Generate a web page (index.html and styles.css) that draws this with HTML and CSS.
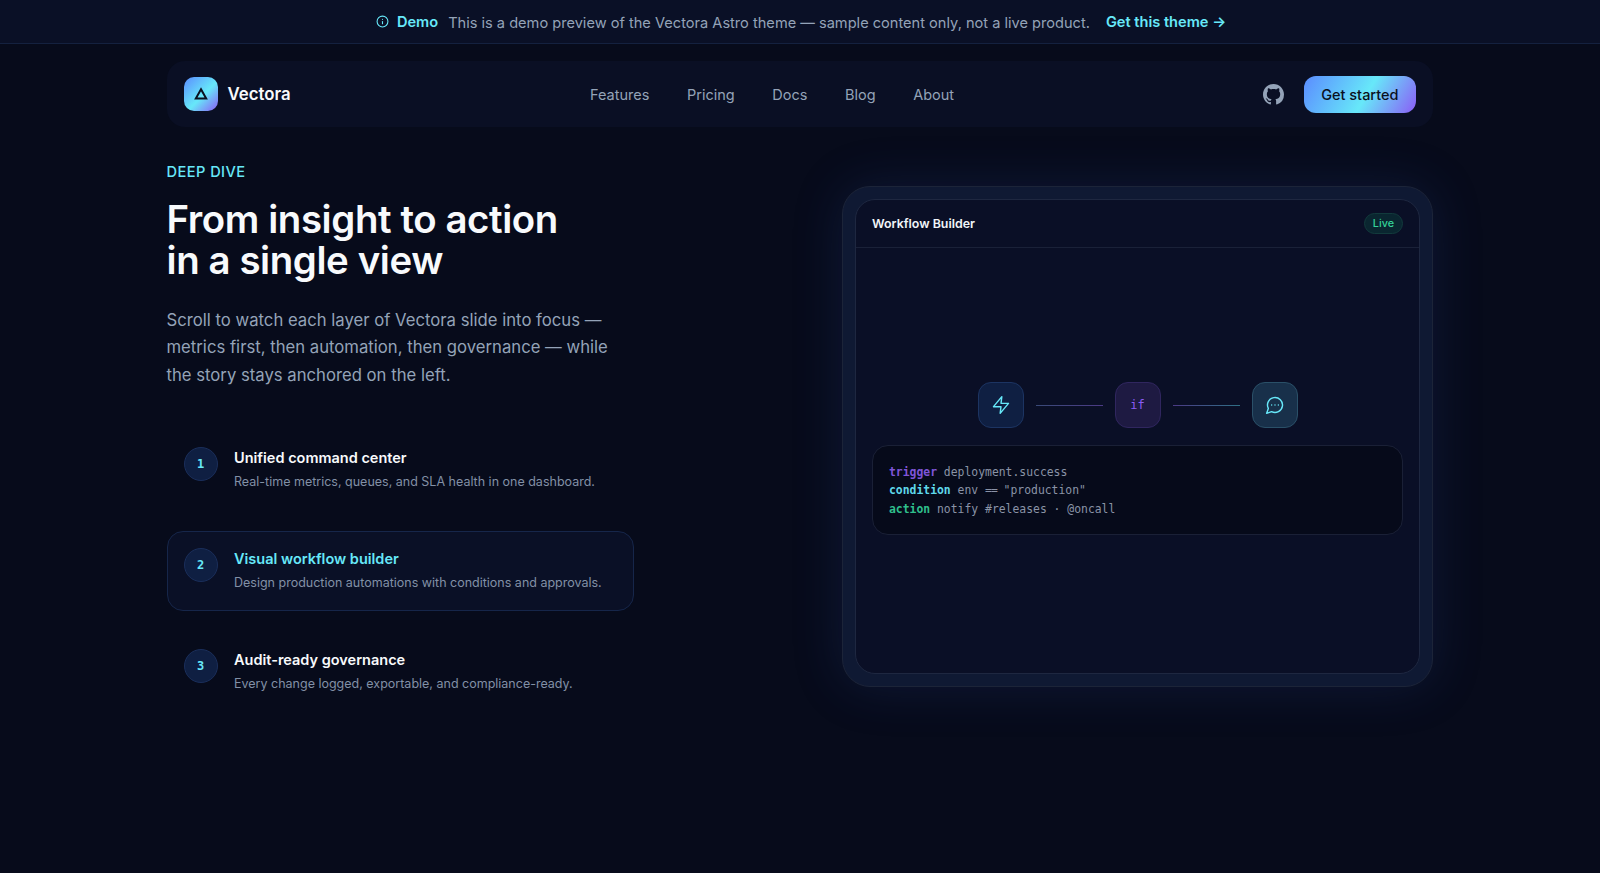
FILE: index.html
```html
<!DOCTYPE html>
<html lang="en">
<head>
    <meta charset="UTF-8">
    <meta name="viewport" content="width=device-width, initial-scale=1.0">
    <title>Vectora</title>
    <link rel="stylesheet" href="styles.css">
</head>
<body>

    <div class="demo-bar">
        <svg class="demo-icon" width="13" height="13" viewBox="0 0 24 24" fill="none" stroke="currentColor" stroke-width="2" stroke-linecap="round"><circle cx="12" cy="12" r="10"/><path d="M12 16v-4"/><path d="M12 8h.01"/></svg>
        <strong class="demo-label">Demo</strong>
        <span class="demo-text">This is a demo preview of the Vectora Astro theme — sample content only, not a live product.</span>
        <a class="demo-link" href="#">Get this theme →</a>
    </div>

    <div class="wrap">
        <header class="nav">
            <a class="brand" href="#">
                <span class="brand-mark">
                    <svg width="16" height="16" viewBox="0 0 16 16" fill="none" stroke="#0a1020" stroke-width="2" stroke-linejoin="miter"><path d="M8 3.2 13.2 12.6H2.8Z"/></svg>
                </span>
                <span class="brand-name">Vectora</span>
            </a>
            <nav class="nav-links">
                <a href="#">Features</a>
                <a href="#">Pricing</a>
                <a href="#">Docs</a>
                <a href="#">Blog</a>
                <a href="#">About</a>
            </nav>
            <div class="nav-actions">
                <a class="github" href="#">
                    <svg width="21" height="21" viewBox="0 0 16 16" fill="currentColor"><path d="M8 0C3.58 0 0 3.58 0 8c0 3.54 2.29 6.53 5.47 7.59.4.07.55-.17.55-.38 0-.19-.01-.82-.01-1.49-2.01.37-2.53-.49-2.69-.94-.09-.23-.48-.94-.82-1.13-.28-.15-.68-.52-.01-.53.63-.01 1.08.58 1.23.82.72 1.21 1.87.87 2.33.66.07-.52.28-.87.51-1.07-1.78-.2-3.64-.89-3.64-3.95 0-.87.31-1.59.82-2.15-.08-.2-.36-1.02.08-2.12 0 0 .67-.21 2.2.82.64-.18 1.32-.27 2-.27s1.36.09 2 .27c1.53-1.04 2.2-.82 2.2-.82.44 1.1.16 1.92.08 2.12.51.56.82 1.27.82 2.15 0 3.07-1.87 3.75-3.65 3.95.29.25.54.73.54 1.48 0 1.07-.01 1.93-.01 2.2 0 .21.15.46.55.38A8.01 8.01 0 0 0 16 8c0-4.42-3.58-8-8-8Z"/></svg>
                </a>
                <a class="cta" href="#">Get started</a>
            </div>
        </header>

        <main class="hero">
            <section class="story">
                <p class="eyebrow">DEEP DIVE</p>
                <h1>From insight to action<br>in a single view</h1>
                <p class="lead">Scroll to watch each layer of Vectora slide into focus — metrics first, then automation, then governance — while the story stays anchored on the left.</p>

                <ul class="steps">
                    <li class="step">
                        <span class="step-num">1</span>
                        <div>
                            <h3>Unified command center</h3>
                            <p>Real-time metrics, queues, and SLA health in one dashboard.</p>
                        </div>
                    </li>
                    <li class="step active">
                        <span class="step-num">2</span>
                        <div>
                            <h3>Visual workflow builder</h3>
                            <p>Design production automations with conditions and approvals.</p>
                        </div>
                    </li>
                    <li class="step">
                        <span class="step-num">3</span>
                        <div>
                            <h3>Audit-ready governance</h3>
                            <p>Every change logged, exportable, and compliance-ready.</p>
                        </div>
                    </li>
                </ul>
            </section>

            <section class="panel">
                <div class="panel-inner">
                    <div class="panel-head">
                        <span class="panel-title">Workflow Builder</span>
                        <span class="live">Live</span>
                    </div>
                    <div class="panel-body">
                        <div class="flow">
                            <span class="node node-blue">
                                <svg width="20" height="20" viewBox="0 0 24 24" fill="none" stroke="currentColor" stroke-width="1.7" stroke-linejoin="round" stroke-linecap="round"><path d="M13 2 3 14h9l-1 8 10-12h-9z"/></svg>
                            </span>
                            <span class="wire wire-a"></span>
                            <span class="node node-purple">if</span>
                            <span class="wire wire-b"></span>
                            <span class="node node-teal">
                                <svg width="20" height="20" viewBox="0 0 24 24" fill="none" stroke="currentColor" stroke-width="1.7" stroke-linecap="round" stroke-linejoin="round"><path d="M7.9 20A9 9 0 1 0 4 16.1L2 22Z"/><path d="M8 12h.01"/><path d="M12 12h.01"/><path d="M16 12h.01"/></svg>
                            </span>
                        </div>
                        <pre class="code"><span class="kw-purple">trigger</span> deployment.success
<span class="kw-cyan">condition</span> env <span class="eq">==</span> "production"
<span class="kw-green">action</span> notify #releases · @oncall</pre>
                    </div>
                </div>
            </section>
        </main>
    </div>

</body>
</html>
```

FILE: styles.css
```css
* {
    box-sizing: border-box;
}

body {
    margin: 0;
    height: 873px;
    overflow: hidden;
    font-family: 'Inter', sans-serif;
    background-color: #070b1b;
    color: #f8fafc;
}

a {
    color: inherit;
    text-decoration: none;
}

.demo-bar {
    display: flex;
    justify-content: center;
    align-items: center;
    height: 44px;
    padding: 2px 0 0 2px;
    background-color: #0a1026;
    border-bottom: 1px solid #14213f;
    font-size: 14.6px;
}

.demo-icon {
    color: #67e8f9;
    margin-right: 8px;
    margin-top: -2px;
}

.demo-label {
    color: #67e8f9;
    font-weight: 600;
    margin-right: 10px;
    margin-top: -2px;
}

.demo-text {
    color: #94a3b8;
}

.demo-link {
    color: #67e8f9;
    font-weight: 600;
    margin-left: 16px;
    margin-top: -1px;
}

.wrap {
    width: 1266.5px;
    margin-left: 166.5px;
}

.nav {
    display: flex;
    justify-content: space-between;
    align-items: center;
    height: 66px;
    margin-top: 17px;
    padding: 0 17.5px 0 17px;
    background-color: #0a0f24;
    border-radius: 18px;
    position: relative;
}

.brand {
    display: flex;
    align-items: center;
    gap: 10px;
}

.brand-mark {
    display: flex;
    justify-content: center;
    align-items: center;
    width: 34px;
    height: 34px;
    border-radius: 10px;
    background: linear-gradient(135deg, #5b8cff 0%, #67e8f9 55%, #8b5cf6 100%);
}

.brand-name {
    font-size: 16.8px;
    font-weight: 600;
}

.nav-links {
    display: flex;
    gap: 37.6px;
    position: absolute;
    left: 423.5px;
    font-size: 14.5px;
    font-weight: 400;
    color: #94a3b8;
}

.nav-actions {
    display: flex;
    align-items: center;
    gap: 20px;
}

.github {
    display: flex;
    color: #94a3b8;
}

.cta {
    display: block;
    padding: 9px 17px;
    border-radius: 12px;
    font-size: 14.5px;
    font-weight: 500;
    line-height: 19px;
    color: #0a1020;
    background: linear-gradient(120deg, #5b8cff 0%, #67e8f9 55%, #8b5cf6 100%);
}

.hero {
    display: flex;
    justify-content: space-between;
    align-items: flex-start;
}

.story {
    width: 467px;
    padding-top: 35px;
}

.eyebrow {
    margin: 0;
    font-size: 14.6px;
    font-weight: 500;
    line-height: 20px;
    letter-spacing: 0.45px;
    color: #67e8f9;
}

h1 {
    margin: 17px 0 0;
    font-size: 38.4px;
    font-weight: 600;
    line-height: 41.4px;
    letter-spacing: -0.4px;
}

.lead {
    margin: 25.4px 0 0;
    width: 455px;
    font-size: 16.7px;
    line-height: 27.2px;
    color: #94a3b8;
}

.steps {
    list-style-type: none;
    margin: 41.5px 0 0;
    padding: 0;
    display: flex;
    flex-direction: column;
    gap: 21px;
}

.step {
    display: flex;
    gap: 16.5px;
    height: 80px;
    padding: 16px;
    border: 1px solid transparent;
    border-radius: 16px;
}

.step.active {
    background-color: #0a1026;
    border-color: #16264a;
}

.step-num {
    flex: none;
    display: flex;
    justify-content: center;
    align-items: center;
    width: 34px;
    height: 34px;
    border-radius: 50%;
    background-color: #0f1f42;
    border: 1px solid #1a2e5a;
    font-family: 'DejaVu Sans Mono', monospace;
    font-size: 12px;
    font-weight: 600;
    color: #67e8f9;
}

.step h3 {
    margin: 0;
    font-size: 14.5px;
    font-weight: 600;
    line-height: 21px;
    color: #f8fafc;
}

.step.active h3 {
    color: #67e8f9;
}

.step p {
    margin: 4px 0 0;
    font-size: 12.5px;
    line-height: 20px;
    color: #8290a6;
}

.panel {
    width: 591px;
    height: 501px;
    margin-top: 59px;
    padding: 12px;
    border: 1px solid #1c2438;
    border-radius: 28px;
    background-color: #0f1933;
    box-shadow: 0 0 50px rgba(40, 70, 150, 0.22);
}

.panel-inner {
    display: flex;
    flex-direction: column;
    height: 100%;
    background-color: #0a0f26;
    border: 1px solid #1e2740;
    border-radius: 20px;
}

.panel-head {
    display: flex;
    justify-content: space-between;
    align-items: center;
    height: 48px;
    padding: 0 16px;
    border-bottom: 1px solid #1a2138;
}

.panel-title {
    font-size: 12.4px;
    font-weight: 600;
    color: #f1f5f9;
}

.live {
    padding: 0 8px;
    line-height: 19px;
    font-size: 10.8px;
    font-weight: 500;
    color: #34d399;
    background-color: #0a2630;
    border: 1px solid #123a3c;
    border-radius: 11px;
}

.panel-body {
    flex: 1;
    display: flex;
    flex-direction: column;
    justify-content: center;
    gap: 17px;
    padding: 0 16px 4px;
}

.flow {
    display: flex;
    justify-content: center;
    align-items: center;
}

.node {
    display: flex;
    justify-content: center;
    align-items: center;
    width: 46px;
    height: 46px;
    border-radius: 13px;
    border: 1px solid;
}

.node-blue {
    color: #67e8f9;
    background-color: #0f1f42;
    border-color: #1c3462;
}

.node-purple {
    color: #8b5cf6;
    background-color: #1e1a42;
    border-color: #30265f;
    font-family: 'DejaVu Sans Mono', monospace;
    font-size: 12px;
}

.node-teal {
    color: #67e8f9;
    background-color: #18304a;
    border-color: #2a5068;
}

.wire {
    width: 67px;
    height: 1px;
    margin: 0 12px;
}

.wire-a {
    background: linear-gradient(90deg, #3a4a78, #4b3a85);
}

.wire-b {
    background: linear-gradient(90deg, #4b3a85, #2f7085);
}

.code {
    margin: 0;
    height: 90px;
    padding: 17px 16px 16px;
    background-color: #060a1a;
    border: 1px solid #1a2036;
    border-radius: 16px;
    font-family: 'DejaVu Sans Mono', monospace;
    font-size: 11.4px;
    line-height: 18.4px;
    color: #8a93a6;
}

.kw-purple {
    color: #7f55d8;
    font-weight: 600;
}

.kw-cyan {
    color: #5fd8ea;
    font-weight: 600;
}

.kw-green {
    color: #2fbf8c;
    font-weight: 600;
}

.eq {
    letter-spacing: -1px;
}
```
